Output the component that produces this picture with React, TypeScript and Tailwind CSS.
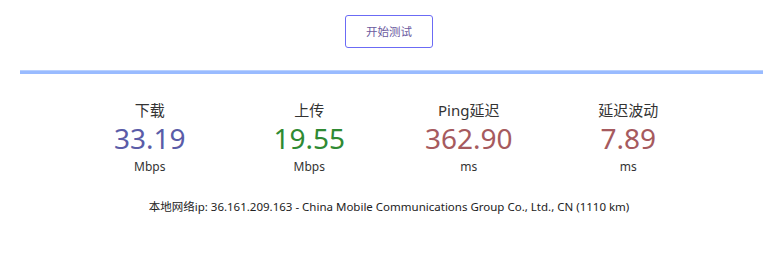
import React from "react";

const stats = [
  { label: "下载", value: "33.19", unit: "Mbps", color: "text-[#5a5ca8]" },
  { label: "上传", value: "19.55", unit: "Mbps", color: "text-[#2f8a33]" },
  { label: "Ping延迟", value: "362.90", unit: "ms", color: "text-[#a65a5e]" },
  { label: "延迟波动", value: "7.89", unit: "ms", color: "text-[#a65a5e]" },
];

export default function App() {
  return (
    <div
      className="w-[763px] h-[255px] bg-white overflow-hidden pl-[20px] text-[#333]"
      style={{ fontFamily: '"Noto Sans", "Noto Sans CJK SC", sans-serif' }}
    >
      <div className="w-[738px] flex flex-col items-center">
        <button className="mt-[15px] w-[88px] h-[33px] rounded-[3px] border border-[#6b6bf5] text-[11.5px] text-[#6b5aa0] bg-white">
          开始测试
        </button>
      </div>
      <div className="mt-[22px] h-[4px] w-[743px] bg-[#99bbff] border-t border-[#b8d0ff]" />
      <div className="w-[738px] flex justify-center mt-[26px]">
        <div className="grid grid-cols-4 w-[638px]">
          {stats.map((s) => (
            <div key={s.label} className="flex flex-col items-center">
              <div className="text-[15px] leading-[20px] text-[#333]">{s.label}</div>
              <div className={`text-[28px] leading-[36px] ${s.color}`}>{s.value}</div>
              <div className="mt-[2px] text-[12px] leading-[18px] text-[#333]">{s.unit}</div>
            </div>
          ))}
        </div>
      </div>
      <div className="w-[738px] mt-[22px] text-center text-[11.5px] leading-[18px] text-[#222]">
        本地网络ip: 36.161.209.163 - China Mobile Communications Group Co., Ltd., CN (1110 km)
      </div>
    </div>
  );
}
